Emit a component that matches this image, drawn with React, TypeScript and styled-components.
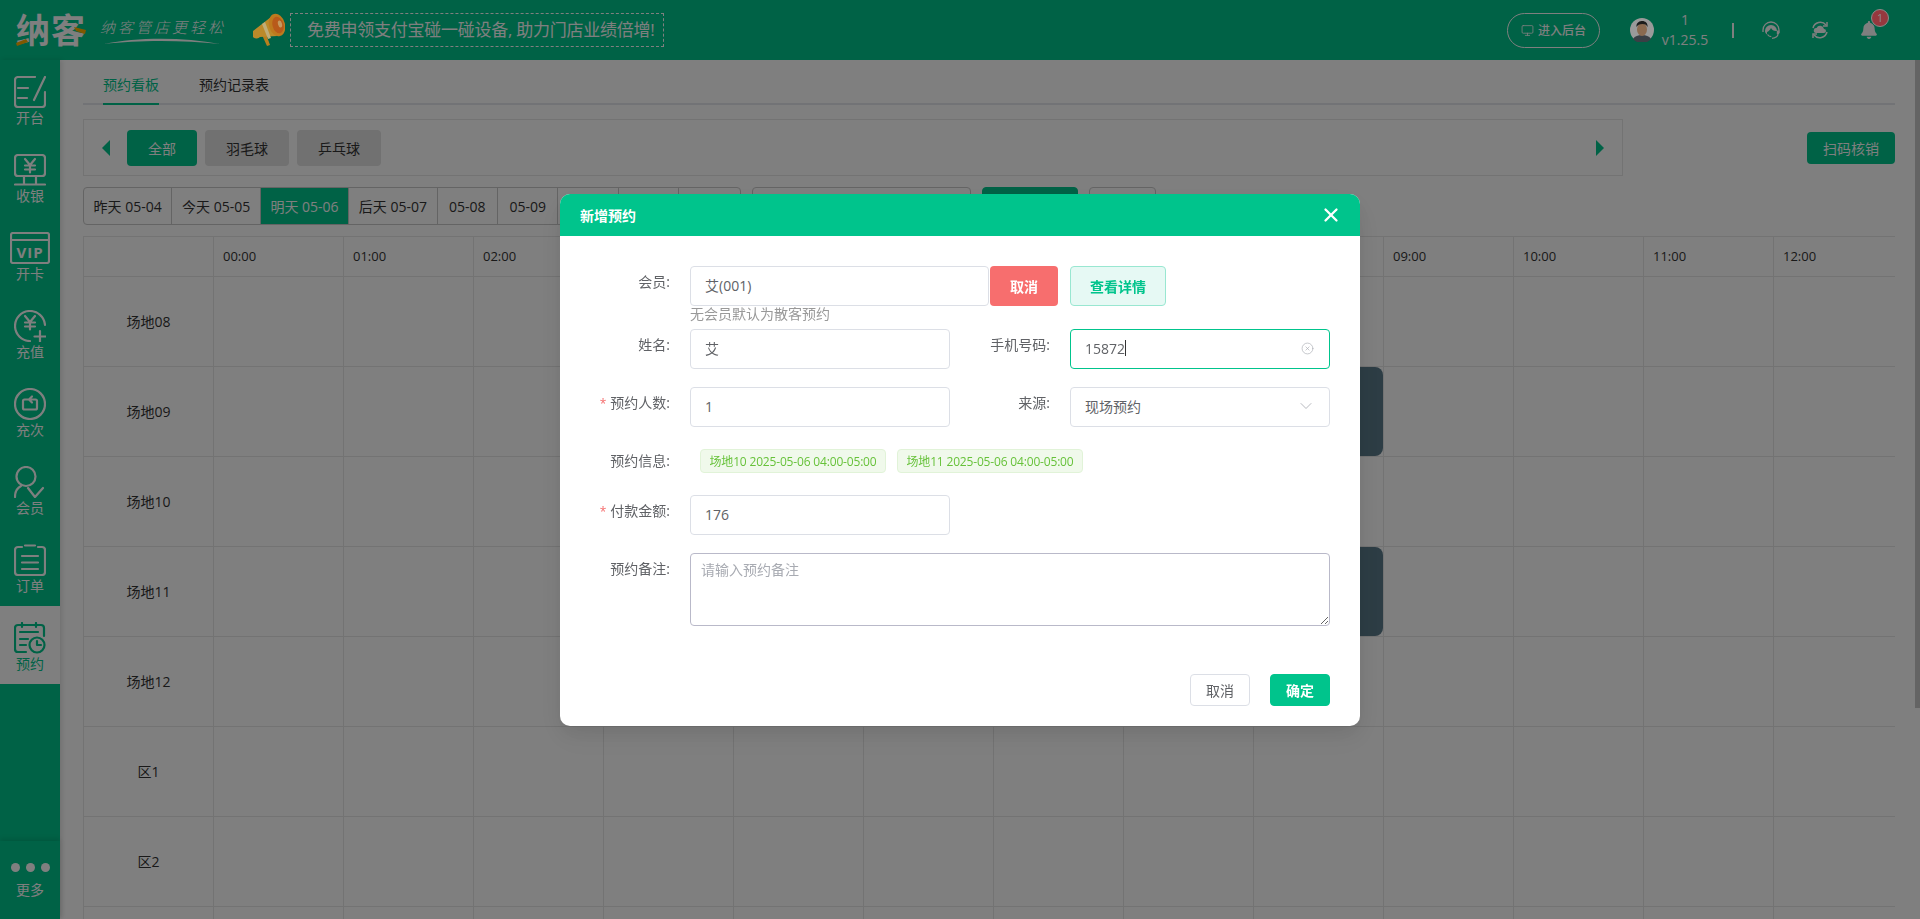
import React from "react";
import styled, { createGlobalStyle } from "styled-components";
import { X, ChevronDown, CircleX, Monitor } from "lucide-react";
import { FaBell } from "react-icons/fa";

const GREEN = "#00c48c";
const FONT = `"Open Sans", "Noto Sans CJK SC", sans-serif`;

const GlobalStyle = createGlobalStyle`
  html, body { margin: 0; height: 100%; overflow: hidden; }
  body { font-family: ${FONT}; font-size: 14px; color: #333; background: #fff; }
  * { box-sizing: border-box; }
`;

const Shell = styled.div`
  height: 100vh;
  display: flex;
  flex-direction: column;
`;

const Header = styled.header`
  height: 60px;
  flex: none;
  display: flex;
  align-items: center;
  background: ${GREEN};
  color: #fff;
`;

const Logo = styled.div`
  position: relative;
  margin-left: 16px;
  width: 70px;
  font-size: 34px;
  line-height: 34px;
  font-weight: 700;
  letter-spacing: 1px;
  white-space: nowrap;
`;

const LogoAccent = styled.svg`
  position: absolute;
  left: 0;
  top: 0;
`;

const Slogan = styled.div`
  position: relative;
  margin: 6px 0 0 14px;
  width: 125px;
  height: 34px;
  font-size: 15px;
  line-height: 22px;
  letter-spacing: 3px;
  font-style: italic;
  font-weight: 300;
  white-space: nowrap;
`;

const Swoosh = styled.svg`
  position: absolute;
  left: 3px;
  top: 21px;
`;

const Horn = styled.svg`
  position: relative;
  z-index: 11;
  margin-left: 28px;
  flex: none;
`;

const Promo = styled.div`
  margin-left: 5px;
  width: 374px;
  height: 34px;
  padding-left: 16px;
  border: 1px dashed #fff;
  font-size: 17px;
  font-weight: 400;
  letter-spacing: -0.25px;
  line-height: 32px;
  white-space: nowrap;
`;

const HeaderRight = styled.div`
  margin-left: auto;
  display: flex;
  align-items: center;
`;

const AdminButton = styled.button`
  width: 93px;
  height: 35px;
  padding: 0;
  display: flex;
  align-items: center;
  justify-content: center;
  gap: 4px;
  border: 1px solid #fff;
  border-radius: 18px;
  background: transparent;
  color: #fff;
  font-family: ${FONT};
  font-size: 12px;
  font-weight: 500;
`;

const Avatar = styled.svg`
  position: relative;
  z-index: 11;
  margin-left: 30px;
`;

const Version = styled.div`
  width: 50px;
  margin-left: 6px;
  text-align: center;
  font-size: 14px;
  line-height: 20px;
`;

const Divider = styled.i`
  width: 2px;
  height: 15px;
  margin-left: 22px;
  background: #fff;
`;

const HeadIcon = styled.svg<{ $gap: number }>`
  margin-left: ${(p) => p.$gap}px;
`;

const BellWrap = styled.div`
  position: relative;
  margin: 0 44px 0 31px;
  width: 16px;
  height: 18px;
  line-height: 0;
`;

const Badge = styled.span`
  position: absolute;
  z-index: 11;
  left: 11px;
  top: -12px;
  width: 18px;
  height: 18px;
  border: 1px solid #8a8a8a;
  border-radius: 50%;
  background: #96383e;
  color: #8f8f8f;
  font-size: 11px;
  line-height: 16px;
  text-align: center;
`;

const Body = styled.div`
  flex: 1;
  min-height: 0;
  display: flex;
`;

const Sidebar = styled.nav`
  width: 60px;
  flex: none;
  display: flex;
  flex-direction: column;
  background: ${GREEN};
  box-shadow: 2px 0 5px rgba(0, 0, 0, 0.12);
  position: relative;
`;

const NavItem = styled.a<{ $active?: boolean }>`
  height: 78px;
  padding-top: 16px;
  display: flex;
  flex-direction: column;
  align-items: center;
  background: ${(p) => (p.$active ? "#fff" : "transparent")};
  color: ${(p) => (p.$active ? GREEN : "#fff")};
  line-height: 19px;
  svg {
    display: block;
    height: 32px;
    fill: none;
    stroke: currentColor;
    stroke-width: 2.2;
    stroke-linecap: round;
    stroke-linejoin: round;
  }
`;

const More = styled.div`
  margin-top: auto;
  height: 78px;
  padding-top: 22px;
  display: flex;
  flex-direction: column;
  align-items: center;
  gap: 8px;
  color: #fff;
  line-height: 19px;
  box-shadow: 0 -2px 5px rgba(0, 0, 0, 0.12);
`;

const Dots = styled.div`
  display: flex;
  gap: 6px;
`;

const Dot = styled.i`
  width: 9px;
  height: 9px;
  border-radius: 50%;
  background: #fff;
`;

const Main = styled.main`
  flex: 1;
  min-width: 0;
  padding: 0 20px 0 23px;
  overflow: hidden;
`;

const ScrollTrack = styled.div`
  width: 5px;
  flex: none;
`;

const ScrollThumb = styled.div`
  height: 648px;
  background: #c8c8c8;
`;

const Tabs = styled.div`
  height: 45px;
  padding-left: 20px;
  display: flex;
  gap: 40px;
  border-bottom: 2px solid #e4e7ed;
`;

const Tab = styled.div<{ $active?: boolean }>`
  height: 45px;
  line-height: 50px;
  color: ${(p) => (p.$active ? GREEN : "#333")};
  border-bottom: 2px solid ${(p) => (p.$active ? GREEN : "transparent")};
`;

const FilterRow = styled.div`
  margin-top: 14px;
  display: flex;
  align-items: center;
  justify-content: space-between;
`;

const FilterBox = styled.div`
  width: 1540px;
  height: 57px;
  padding: 0 18px;
  display: flex;
  align-items: center;
  gap: 8px;
  border: 1px solid #e6e6e6;
`;

const Arrow = styled.i<{ $right?: boolean }>`
  width: 0;
  height: 0;
  border-top: 8px solid transparent;
  border-bottom: 8px solid transparent;
  ${(p) =>
    p.$right
      ? `border-left: 8px solid ${GREEN}; margin-left: auto;`
      : `border-right: 8px solid ${GREEN}; margin-right: 9px;`}
`;

const TypeButton = styled.button<{ $active?: boolean }>`
  width: ${(p) => (p.$active ? 70 : 84)}px;
  height: 36px;
  padding: 0;
  border: none;
  border-radius: 4px;
  background: ${(p) => (p.$active ? GREEN : "#e2e2e2")};
  color: ${(p) => (p.$active ? "#fff" : "#333")};
  font-family: ${FONT};
  font-size: 14px;
`;

const ScanButton = styled.button`
  width: 88px;
  height: 32px;
  padding: 0;
  border: none;
  border-radius: 4px;
  background: ${GREEN};
  color: #fff;
  font-family: ${FONT};
  font-size: 14px;
`;

const DateRow = styled.div`
  margin-top: 11px;
  height: 38px;
  display: flex;
  gap: 11px;
`;

const DateGroup = styled.div`
  display: flex;
  border: 1px solid #c8c8c8;
  border-radius: 4px;
  overflow: hidden;
`;

const DateCell = styled.div<{ $active?: boolean; $wide?: boolean }>`
  width: ${(p) => (p.$wide ? 88.4 : 60.4)}px;
  display: flex;
  align-items: center;
  justify-content: center;
  white-space: nowrap;
  border-right: 1px solid #c8c8c8;
  background: ${(p) => (p.$active ? GREEN : "transparent")};
  color: ${(p) => (p.$active ? "#fff" : "#333")};
  &:last-child { border-right: none; }
`;

const DateInput = styled.div`
  width: 219px;
  border: 1px solid #c8c8c8;
  border-radius: 4px;
`;

const QueryButton = styled.div<{ $primary?: boolean }>`
  width: ${(p) => (p.$primary ? 96 : 67)}px;
  border: 1px solid ${(p) => (p.$primary ? GREEN : "#c8c8c8")};
  border-radius: 4px;
  background: ${(p) => (p.$primary ? GREEN : "transparent")};
`;

const Board = styled.div`
  margin-top: 11px;
  display: grid;
  grid-template-columns: repeat(14, 130px);
  grid-template-rows: 40px;
  grid-auto-rows: 90px;
  overflow: hidden;
  border-top: 1px solid #e6e6e6;
  border-left: 1px solid #e6e6e6;
`;

const Cell = styled.div`
  border-right: 1px solid #e6e6e6;
  border-bottom: 1px solid #e6e6e6;
`;

const TimeCell = styled(Cell)`
  padding-left: 9px;
  font-size: 13px;
  line-height: 39px;
`;

const RowName = styled(Cell)`
  padding-bottom: 1px;
  display: flex;
  align-items: center;
  justify-content: center;
`;

const Booking = styled.div`
  height: 100%;
  border-radius: 8px;
  background: #5a7a8a;
`;

const Overlay = styled.div`
  position: fixed;
  inset: 0;
  z-index: 10;
  display: flex;
  justify-content: center;
  padding-top: 194px;
  background: rgba(0, 0, 0, 0.5);
`;

const Modal = styled.div`
  width: 800px;
  height: 532px;
  display: flex;
  flex-direction: column;
  border-radius: 10px;
  overflow: hidden;
  background: #fff;
  box-shadow: 0 12px 32px 4px rgba(0, 0, 0, 0.04), 0 8px 20px rgba(0, 0, 0, 0.08);
`;

const ModalHead = styled.div`
  height: 42px;
  padding: 0 18px 0 20px;
  display: flex;
  align-items: center;
  justify-content: space-between;
  background: ${GREEN};
  color: #fff;
  font-weight: 700;
`;

const ModalBody = styled.div`
  flex: 1;
  padding: 30px 30px 0 20px;
`;

const FormRow = styled.div<{ $gap?: number }>`
  display: flex;
  margin-top: ${(p) => p.$gap ?? 0}px;
`;

const Label = styled.label<{ $center?: boolean }>`
  width: 90px;
  margin-right: 20px;
  flex: none;
  text-align: right;
  color: #606266;
  line-height: ${(p) => (p.$center ? 24 : 32)}px;
`;

const FieldLabel = styled(Label)`
  margin-left: 10px;
`;

const Star = styled.span`
  color: #f56c6c;
  margin-right: 4px;
  font-size: 12px;
`;

const Input = styled.div<{ $width?: number; $focus?: boolean }>`
  position: relative;
  width: ${(p) => p.$width ?? 260}px;
  height: 40px;
  padding: 0 14px 2px;
  display: flex;
  align-items: center;
  border: 1px solid ${(p) => (p.$focus ? GREEN : "#dcdfe6")};
  border-radius: 4px;
  color: #606266;
  background: #fff;
`;

const Caret = styled.i`
  width: 1px;
  height: 16px;
  background: #333;
`;

const InputIcon = styled.span<{ $shift?: number }>`
  margin-left: auto;
  margin-right: ${(p) => p.$shift ?? 0}px;
  display: flex;
  color: #a8abb2;
`;

const CancelMember = styled.button`
  width: 68px;
  height: 40px;
  margin-left: 1px;
  padding: 0;
  border: none;
  border-radius: 4px;
  background: #f76e6e;
  color: #fff;
  font-family: ${FONT};
  font-size: 14px;
  font-weight: 700;
`;

const DetailButton = styled.button`
  width: 96px;
  height: 40px;
  margin-left: 12px;
  padding: 0;
  border: 1px solid #99e7d1;
  border-radius: 4px;
  background: #e6f9f4;
  color: ${GREEN};
  font-family: ${FONT};
  font-size: 14px;
  font-weight: 700;
`;

const Hint = styled.div`
  margin-left: 110px;
  height: 23px;
  line-height: 15px;
  color: #999;
`;

const Tags = styled.div`
  margin-left: 10px;
  display: flex;
  gap: 11px;
`;

const Tag = styled.span`
  width: 186px;
  height: 24px;
  display: flex;
  align-items: center;
  justify-content: center;
  border: 1px solid #e1f3d8;
  border-radius: 4px;
  background: #f0f9eb;
  color: #67c23a;
  font-size: 12px;
  letter-spacing: -0.17px;
  white-space: nowrap;
`;

const Remark = styled.textarea`
  display: block;
  width: 640px;
  height: 73px;
  padding: 5px 10px;
  border: 1px solid #b9b9c9;
  border-radius: 4px;
  outline: none;
  font-family: ${FONT};
  font-size: 14px;
  line-height: 21px;
  &::placeholder { color: #a8abb2; }
`;

const ModalFoot = styled.div`
  padding: 0 30px 20px 0;
  display: flex;
  justify-content: flex-end;
  gap: 20px;
`;

const FootButton = styled.button<{ $primary?: boolean }>`
  width: 60px;
  height: 32px;
  padding: 0;
  border: 1px solid ${(p) => (p.$primary ? GREEN : "#dcdfe6")};
  border-radius: 4px;
  background: ${(p) => (p.$primary ? GREEN : "#fff")};
  color: ${(p) => (p.$primary ? "#fff" : "#606266")};
  font-family: ${FONT};
  font-size: 14px;
  font-weight: ${(p) => (p.$primary ? 700 : 400)};
`;

const Yen = () => <path d="M11 5l5 6 5-6M11 11.500h10M11 15.500h10M16 11.500v7" />;

const navItems: { label: string; width?: number; icon: React.ReactNode }[] = [
  {
    label: "开台",
    icon: (
      <>
        <path d="M21 1H4a3 3 0 0 0-3 3v24a3 3 0 0 0 3 3h24a3 3 0 0 0 3-3V16" />
        <path d="M4 12h10M4 22h9M31 1l-11 23" />
      </>
    ),
  },
  {
    label: "收银",
    icon: (
      <>
        <rect x="1" y="1" width="30" height="21" rx="3" />
        <Yen />
        <path d="M10 22v8M22 22v8M1 30.500h30" />
      </>
    ),
  },
  {
    label: "开卡",
    width: 40,
    icon: (
      <>
        <rect x="1" y="1" width="38" height="30" rx="2" />
        <path d="M1 8h38" />
        <text x="20" y="26" textAnchor="middle" fontSize="15" fontWeight="700" fill="currentColor" stroke="none" letterSpacing="1">
          VIP
        </text>
      </>
    ),
  },
  {
    label: "充值",
    icon: (
      <>
        <path d="M16 31A15 15 0 1 1 31 15" />
        <g transform="translate(0 1)">
          <Yen />
        </g>
        <path d="M26 21v11M20.500 26.500h11" />
      </>
    ),
  },
  {
    label: "充次",
    icon: (
      <>
        <circle cx="16" cy="16" r="15" />
        <path d="M18 11.500h3.500a1.500 1.500 0 0 1 1.500 1.500v7a1.500 1.500 0 0 1-1.500 1.500h-11a1.500 1.500 0 0 1-1.500-1.500v-7a1.500 1.500 0 0 1 1.500-1.500H16M18 8.500l-3 3 3 3" />
      </>
    ),
  },
  {
    label: "会员",
    icon: (
      <>
        <circle cx="12" cy="10.500" r="9.500" />
        <path d="M1 31c0-5 2-9 6-11M14 22l7 9 8-9" />
      </>
    ),
  },
  {
    label: "订单",
    icon: (
      <>
        <path d="M8 3H4a3 3 0 0 0-3 3v22a3 3 0 0 0 3 3h24a3 3 0 0 0 3-3V6a3 3 0 0 0-3-3h-4" />
        <path d="M11 1.500h10M8 12h16M8 18.500h16M8 25h16" />
      </>
    ),
  },
];

const hours = Array.from({ length: 13 }, (_, i) => `${String(i).padStart(2, "0")}:00`);
const dates = ["昨天 05-04", "今天 05-05", "明天 05-06", "后天 05-07", "05-08", "05-09", "", "", ""];
const rowNames = ["场地08", "场地09", "场地10", "场地11", "场地12", "区1", "区2", ""];

export default function App() {
  return (
    <Shell>
      <GlobalStyle />
      <Header>
        <Logo>
          纳客
          <LogoAccent width="70" height="34" viewBox="0 0 70 34">
            <path d="M0 30l10-4 2 3-11 4zM58 14l12 3-1 4-9-3z" fill="#ffb000" />
          </LogoAccent>
        </Logo>
        <Slogan>
          纳客管店更轻松
          <Swoosh width="118" height="8" viewBox="0 0 118 8">
            <path d="M1 7C35 0 80 0 117 7C80 3 35 3 1 7z" fill="#fff" />
          </Swoosh>
        </Slogan>
        <Horn width="32" height="34" viewBox="0 0 32 34">
          <path d="M9 22l5 11 3-1-4-11z" fill="#b8801e" />
          <path d="M0 18L18 4l6 19-17 1a4 4 0 0 1-7-6z" fill="#bc8a2a" />
          <path d="M9 11l6 15 3-1-6-16z" fill="#c0ad78" />
          <ellipse cx="24" cy="12" rx="8" ry="11.500" transform="rotate(-15 24 12)" fill="#bd7a1e" />
          <ellipse cx="25" cy="12" rx="5.500" ry="8.500" transform="rotate(-15 25 12)" fill="#b85a1a" />
          <ellipse cx="27" cy="11" rx="2" ry="3.500" transform="rotate(-15 27 11)" fill="#c49a60" />
        </Horn>
        <Promo>免费申领支付宝碰一碰设备, 助力门店业绩倍增!</Promo>
        <HeaderRight>
          <AdminButton>
            <Monitor size={13} strokeWidth={1.5} />
            进入后台
          </AdminButton>
          <Avatar width="24" height="24" viewBox="0 0 24 24">
            <circle cx="12" cy="12" r="12" fill="#9a9a9a" />
            <path d="M3 21c2-3 5-4 9-4s7 1 9 4a12 12 0 0 1-18 0z" fill="#3a3f45" />
            <ellipse cx="12" cy="11.500" rx="5" ry="6.500" fill="#8a6a50" />
            <path d="M6.500 9C6 4 10 3 12.500 3S18 5 17.500 9c-1-2-2-3-5-3S7.500 7 6.500 9z" fill="#1c1c1c" />
          </Avatar>
          <Version>
            1
            <br />
            v1.25.5
          </Version>
          <Divider />
          <HeadIcon $gap={28} width="18" height="18" viewBox="0 0 18 18" fill="none" stroke="#fff" strokeWidth="1.300">
            <path d="M1 11V9a8 8 0 0 1 16 0v3" />
            <path d="M3 10a6 6 0 0 1 12 0h-1c-2.500 0-4-1.200-5-3-1 2-2.500 3.500-4 4v2.500C3.800 12.800 3 11.500 3 10z" fill="#fff" stroke="none" />
            <path d="M14.800 9.500h2.400v3.500h-2.400z" fill="#fff" stroke="none" />
            <path d="M16 13c0 2.500-2.800 4.300-6 4.300M5.500 13.500c1 1.500 2.300 2.200 3.800 2.200" />
          </HeadIcon>
          <HeadIcon $gap={31} width="18" height="18" viewBox="0 0 18 18" fill="none" stroke="#fff" strokeWidth="1.500">
            <path d="M2 7a7.500 7.500 0 0 1 13-3M16 11a7.500 7.500 0 0 1-13 3" />
            <path d="M16 1v4h-4M2 17v-4h4" />
            <path d="M5 12a2.500 2.500 0 0 1 .5-5 4 4 0 0 1 7.500 1 2 2 0 0 1 0 4z" fill="#fff" stroke="none" />
          </HeadIcon>
          <BellWrap>
            <FaBell size={18} color="#fff" />
            <Badge>1</Badge>
          </BellWrap>
        </HeaderRight>
      </Header>
      <Body>
        <Sidebar>
          {navItems.map((item) => (
            <NavItem key={item.label}>
              <svg width={item.width ?? 32} viewBox={`0 0 ${item.width ?? 32} 32`}>
                {item.icon}
              </svg>
              {item.label}
            </NavItem>
          ))}
          <NavItem $active>
            <svg width="32" viewBox="0 0 32 32">
              <path d="M12 30H4a3 3 0 0 1-3-3V6a3 3 0 0 1 3-3h23a3 3 0 0 1 3 3v8" />
              <path d="M8 1v4M22 1v4M6 10h18M6 17h8M6 23h6" />
              <circle cx="23" cy="23" r="7.500" />
              <path d="M23 19v4h4" />
            </svg>
            预约
          </NavItem>
          <More>
            <Dots>
              <Dot />
              <Dot />
              <Dot />
            </Dots>
            更多
          </More>
        </Sidebar>
        <Main>
          <Tabs>
            <Tab $active>预约看板</Tab>
            <Tab>预约记录表</Tab>
          </Tabs>
          <FilterRow>
            <FilterBox>
              <Arrow />
              <TypeButton $active>全部</TypeButton>
              <TypeButton>羽毛球</TypeButton>
              <TypeButton>乒乓球</TypeButton>
              <Arrow $right />
            </FilterBox>
            <ScanButton>扫码核销</ScanButton>
          </FilterRow>
          <DateRow>
            <DateGroup>
              {dates.map((d, i) => (
                <DateCell key={i} $wide={i < 4} $active={i === 2}>
                  {d}
                </DateCell>
              ))}
            </DateGroup>
            <DateInput />
            <QueryButton $primary />
            <QueryButton />
          </DateRow>
          <Board>
            <Cell />
            {hours.map((h) => (
              <TimeCell key={h}>{h}</TimeCell>
            ))}
            {rowNames.map((name, r) => (
              <React.Fragment key={r}>
                <RowName>{name}</RowName>
                {hours.map((h) => (
                  <Cell key={h}>
                    {h === "08:00" && (name === "场地09" || name === "场地11") && <Booking />}
                  </Cell>
                ))}
              </React.Fragment>
            ))}
          </Board>
        </Main>
        <ScrollTrack>
          <ScrollThumb />
        </ScrollTrack>
      </Body>
      <Overlay>
        <Modal>
          <ModalHead>
            新增预约
            <X size={22} strokeWidth={2.5} />
          </ModalHead>
          <ModalBody>
            <FormRow>
              <Label>会员:</Label>
              <Input $width={299}>艾(001)</Input>
              <CancelMember>取消</CancelMember>
              <DetailButton>查看详情</DetailButton>
            </FormRow>
            <Hint>无会员默认为散客预约</Hint>
            <FormRow>
              <Label>姓名:</Label>
              <Input>艾</Input>
              <FieldLabel>手机号码:</FieldLabel>
              <Input $focus>
                15872
                <Caret />
                <InputIcon $shift={1}>
                  <CircleX size={13} strokeWidth={1.2} />
                </InputIcon>
              </Input>
            </FormRow>
            <FormRow $gap={18}>
              <Label>
                <Star>*</Star>预约人数:
              </Label>
              <Input>1</Input>
              <FieldLabel>来源:</FieldLabel>
              <Input>
                现场预约
                <InputIcon $shift={-1}>
                  <ChevronDown size={20} strokeWidth={1} />
                </InputIcon>
              </Input>
            </FormRow>
            <FormRow $gap={22}>
              <Label $center>预约信息:</Label>
              <Tags>
                <Tag>场地10 2025-05-06 04:00-05:00</Tag>
                <Tag>场地11 2025-05-06 04:00-05:00</Tag>
              </Tags>
            </FormRow>
            <FormRow $gap={22}>
              <Label>
                <Star>*</Star>付款金额:
              </Label>
              <Input>176</Input>
            </FormRow>
            <FormRow $gap={18}>
              <Label>预约备注:</Label>
              <Remark placeholder="请输入预约备注" />
            </FormRow>
          </ModalBody>
          <ModalFoot>
            <FootButton>取消</FootButton>
            <FootButton $primary>确定</FootButton>
          </ModalFoot>
        </Modal>
      </Overlay>
    </Shell>
  );
}
